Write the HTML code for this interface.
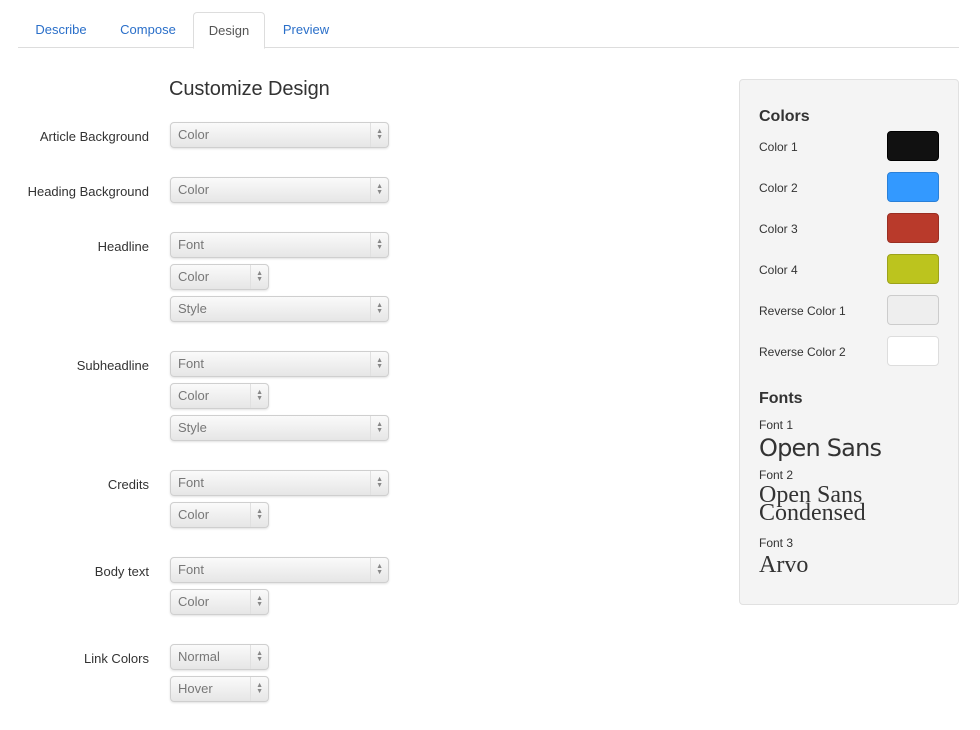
<!DOCTYPE html>
<html><head><style>
body{margin:0;width:980px;height:730px;background:#fff;font-family:"Liberation Sans",sans-serif;color:#333;position:relative;overflow:hidden}
.a{position:absolute}
.tab{position:absolute;top:12px;height:35px;line-height:35px;font-size:13px;color:#2a6fc9;text-align:center}
.lbl{position:absolute;right:831px;font-size:13px;color:#333;white-space:nowrap}
.sel{position:absolute;left:170px;height:24px;border:1px solid #cfcfcf;border-radius:4px;background:linear-gradient(#fafafa,#e6e6e6);box-shadow:0 1px 2px rgba(0,0,0,.12);font-size:13px;color:#777;line-height:24px;padding-left:7px;box-sizing:content-box}
.sel:after{content:"";position:absolute;right:17px;top:0;bottom:0;border-left:1px solid #e0e0e0}
.sel i{position:absolute;right:5px;top:6px;font-style:normal;font-size:7px;line-height:6px;color:#888}
.w{width:210px}.n{width:90px}
.sw{position:absolute;left:887px;width:50px;height:28px;border-radius:4px;border:1px solid}
.cl{position:absolute;left:759px;font-size:12px;color:#333}
</style></head><body>
<div class="a" style="left:18px;top:47px;width:941px;height:1px;background:#ddd"></div>
<div class="tab" style="left:20px;width:82px">Describe</div>
<div class="tab" style="left:106px;width:84px">Compose</div>
<div class="tab" style="left:193px;width:70px;border:1px solid #ddd;border-bottom:1px solid #fff;border-radius:4px 4px 0 0;background:#fff;color:#555;height:35px">Design</div>
<div class="tab" style="left:270px;width:72px">Preview</div>
<div class="a" style="left:169px;top:78px;font-size:20px;color:#333;letter-spacing:-0.1px">Customize Design</div>

<div class="lbl" style="top:129px">Article Background</div>
<div class="sel w" style="top:122px">Color<i>▲<br>▼</i></div>
<div class="lbl" style="top:184px">Heading Background</div>
<div class="sel w" style="top:177px">Color<i>▲<br>▼</i></div>
<div class="lbl" style="top:239px">Headline</div>
<div class="sel w" style="top:232px">Font<i>▲<br>▼</i></div>
<div class="sel n" style="top:264px">Color<i>▲<br>▼</i></div>
<div class="sel w" style="top:296px">Style<i>▲<br>▼</i></div>
<div class="lbl" style="top:358px">Subheadline</div>
<div class="sel w" style="top:351px">Font<i>▲<br>▼</i></div>
<div class="sel n" style="top:383px">Color<i>▲<br>▼</i></div>
<div class="sel w" style="top:415px">Style<i>▲<br>▼</i></div>
<div class="lbl" style="top:477px">Credits</div>
<div class="sel w" style="top:470px">Font<i>▲<br>▼</i></div>
<div class="sel n" style="top:502px">Color<i>▲<br>▼</i></div>
<div class="lbl" style="top:564px">Body text</div>
<div class="sel w" style="top:557px">Font<i>▲<br>▼</i></div>
<div class="sel n" style="top:589px">Color<i>▲<br>▼</i></div>
<div class="lbl" style="top:651px">Link Colors</div>
<div class="sel n" style="top:644px">Normal<i>▲<br>▼</i></div>
<div class="sel n" style="top:676px">Hover<i>▲<br>▼</i></div>

<div class="a" style="left:739px;top:79px;width:218px;height:524px;background:#f4f4f4;border:1px solid #e1e1e1;border-radius:4px"></div>
<div class="a" style="left:759px;top:108px;font-size:16px;font-weight:bold;color:#333">Colors</div>
<div class="cl" style="top:140px">Color 1</div><div class="sw" style="top:131px;background:#111;border-color:#000"></div>
<div class="cl" style="top:181px">Color 2</div><div class="sw" style="top:172px;background:#3399ff;border-color:#2a80d8"></div>
<div class="cl" style="top:222px">Color 3</div><div class="sw" style="top:213px;background:#b93a2b;border-color:#9a2e22"></div>
<div class="cl" style="top:263px">Color 4</div><div class="sw" style="top:254px;background:#bcc41e;border-color:#9ca21a"></div>
<div class="cl" style="top:304px">Reverse Color 1</div><div class="sw" style="top:295px;background:#eee;border-color:#ccc"></div>
<div class="cl" style="top:345px">Reverse Color 2</div><div class="sw" style="top:336px;background:#fff;border-color:#ddd"></div>
<div class="a" style="left:759px;top:390px;font-size:16px;font-weight:bold;color:#333">Fonts</div>
<div class="cl" style="top:418px">Font 1</div>
<div class="a" style="left:759px;top:434px;font-size:24px;font-family:'DejaVu Sans',sans-serif;color:#333;letter-spacing:-0.8px">Open Sans</div>
<div class="cl" style="top:468px">Font 2</div>
<div class="a" style="left:759px;top:486px;font-size:24px;line-height:18px;font-family:'Liberation Serif',serif;color:#333">Open Sans<br>Condensed</div>
<div class="cl" style="top:536px">Font 3</div>
<div class="a" style="left:759px;top:552px;font-size:24px;font-family:'Liberation Serif',serif;color:#333">Arvo</div>
</body></html>
